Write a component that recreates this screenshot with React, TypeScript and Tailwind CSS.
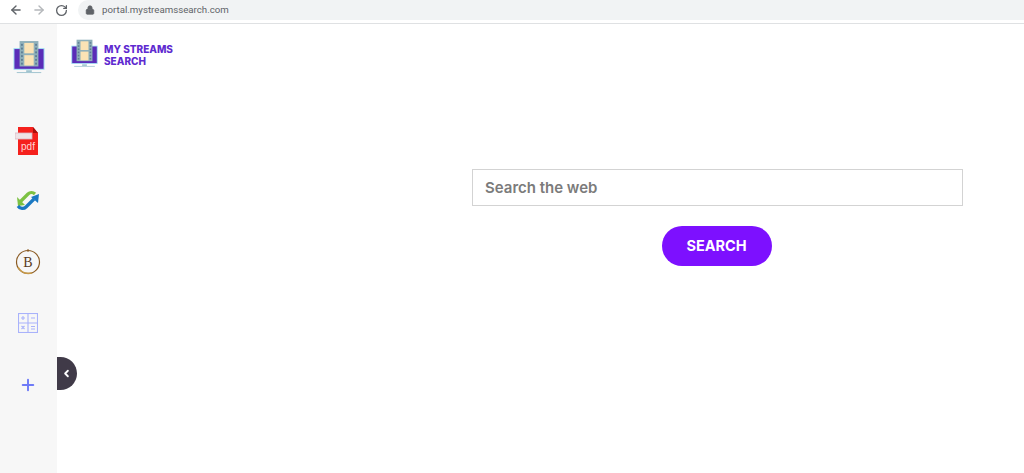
import { ArrowLeft, ArrowRight, RotateCw, Lock, ChevronLeft, Plus } from 'lucide-react';

// Film strip in front of a monitor, used for the sidebar and the header logo
function FilmLogo({ className }: { className: string }) {
  return (
    <svg viewBox="0 0 34 36" className={className}>
      <rect x="1" y="8" width="32" height="22" fill="#5a2db8" stroke="#a5e6f5" strokeWidth="1" />
      <rect x="7" y="0" width="20" height="27" fill="#8fb0ba" />
      <rect x="12" y="2" width="10" height="11" fill="#fbe3b5" />
      <rect x="12" y="15" width="10" height="11" fill="#fbe3b5" />
      <g fill="#5f7f95">
        <rect x="8.5" y="3" width="2" height="2" />
        <rect x="8.5" y="7" width="2" height="2" />
        <rect x="8.5" y="11" width="2" height="2" />
        <rect x="8.5" y="15" width="2" height="2" />
        <rect x="8.5" y="19" width="2" height="2" />
        <rect x="8.5" y="23" width="2" height="2" />
        <rect x="23.5" y="3" width="2" height="2" />
        <rect x="23.5" y="7" width="2" height="2" />
        <rect x="23.5" y="11" width="2" height="2" />
        <rect x="23.5" y="15" width="2" height="2" />
        <rect x="23.5" y="19" width="2" height="2" />
        <rect x="23.5" y="23" width="2" height="2" />
      </g>
      <rect x="14" y="31" width="6" height="2" fill="#9fc3cf" />
      <rect x="4" y="33" width="26" height="1" fill="#9fc3cf" />
    </svg>
  );
}

function PdfIcon() {
  return (
    <svg viewBox="0 0 24 28" className="w-[24px] h-[28px]">
      <path d="M3 0h15l5 6v22H3z" fill="#f5211d" />
      <path d="M18 0l5 6h-5z" fill="#a80f0c" />
      <rect x="0" y="6" width="17" height="6" fill="#eee3e6" stroke="#d9b6c0" strokeWidth="0.8" />
      <text x="13" y="23" textAnchor="middle" fontSize="10" fill="#ffd9d6" fontFamily="'Liberation Sans', sans-serif">pdf</text>
    </svg>
  );
}

function SyncIcon() {
  return (
    <svg viewBox="0 0 24 22" className="w-[24px] h-[22px]" fill="none">
      <path d="M4 13L12 5c2-2 5-2 7 0" stroke="#7cc142" strokeWidth="3.2" />
      <path d="M1 8l1 9 7-1z" fill="#7cc142" />
      <path d="M2 17c2 3 6 3 8 1l8-8" stroke="#1a78c2" strokeWidth="3.2" />
      <path d="M23 5l-1 9-7-6z" fill="#1a78c2" />
    </svg>
  );
}

function CoinIcon() {
  return (
    <svg viewBox="0 0 26 26" className="w-[26px] h-[26px]" fill="none">
      <circle cx="13" cy="13" r="11.5" stroke="#8a5a22" strokeWidth="1.2" />
      <path d="M3 18c3 6 9 7 14 6" stroke="#c79a4a" strokeWidth="1.6" />
      <path d="M13 0v3" stroke="#8a5a22" strokeWidth="1" />
      <text x="13" y="18" textAnchor="middle" fontSize="14" fill="#5a3a1c" fontFamily="'Liberation Serif', serif">B</text>
    </svg>
  );
}

function CalcIcon() {
  return (
    <svg viewBox="0 0 20 20" className="w-[20px] h-[20px]" fill="none" stroke="#a9b2fb" strokeWidth="1.1">
      <rect x="0.5" y="0.5" width="19" height="19" />
      <path d="M10 0v20M0 10h20" />
      <path d="M3 5h4M5 3v4M13 5h4M3.5 13l3 3M6.5 13l-3 3M13 13.5h4M13 16h4" />
    </svg>
  );
}

export default function App() {
  return (
    <div className="h-screen overflow-hidden bg-white font-['Inter',sans-serif]">
      {/* Browser toolbar */}
      <div className="h-[24px] flex border-b border-[#dfe1e3]">
        <div className="w-[78px] flex items-center gap-[9px] pl-[9px] pb-[3px] shrink-0">
          <ArrowLeft className="w-[14px] h-[14px] text-[#5f6368]" strokeWidth={2.4} />
          <ArrowRight className="w-[14px] h-[14px] text-[#b4b7ba]" strokeWidth={2.4} />
          <RotateCw className="w-[13px] h-[13px] text-[#5f6368]" strokeWidth={2.4} />
        </div>
        <div className="flex-1 h-[20px] bg-[#f1f3f4] rounded-l-[10px] flex items-center pl-[7px]">
          <Lock className="w-[10px] h-[10px] text-[#5f6368] fill-[#5f6368]" />
          <span className="ml-[7px] text-[9.7px] text-[#5f6368] font-['Roboto',sans-serif]">portal.mystreamssearch.com</span>
        </div>
      </div>

      <div className="flex h-[449px]">
        {/* Sidebar */}
        <div className="w-[57px] shrink-0 bg-[#f7f7f7] flex flex-col items-center pr-[2px]">
          <FilmLogo className="w-[32px] h-[34px] mt-[17px] ml-[3px]" />
          <div className="mt-[52px] -ml-[1px]"><PdfIcon /></div>
          <div className="mt-[34px]"><SyncIcon /></div>
          <div className="mt-[38px]"><CoinIcon /></div>
          <div className="mt-[38px]"><CalcIcon /></div>
          <Plus className="w-[18px] h-[18px] mt-[43px] text-[#6f7bf7]" strokeWidth={2.6} />
        </div>

        {/* Main */}
        <div className="relative flex-1">
          <button className="absolute left-0 top-[333px] w-[20px] h-[33px] rounded-r-full bg-[#403a48] flex items-center justify-center pr-[2px]">
            <ChevronLeft className="w-[11px] h-[11px] text-white" strokeWidth={4} />
          </button>

          <div className="flex items-center gap-[6px] pl-[14px] pt-[15px]">
            <FilmLogo className="w-[27px] h-[30px]" />
            <div className="text-[10px] leading-[12px] font-extrabold text-[#5f2bd0] mt-[1px]">
              <div>MY STREAMS</div>
              <div>SEARCH</div>
            </div>
          </div>

          <div className="ml-[415px] w-[491px] mt-[100px] flex flex-col items-center">
            <input
              type="text"
              placeholder="Search the web"
              className="w-full h-[37px] border border-[#d3d3d3] px-[12px] text-[15px] font-semibold outline-none placeholder:text-[#7b7b7b]"
            />
            <button className="mt-[20px] -ml-[2px] w-[110px] h-[40px] rounded-full bg-[#7d10ff] text-white text-[14.5px] font-bold">
              SEARCH
            </button>
          </div>
        </div>
      </div>
    </div>
  );
}
